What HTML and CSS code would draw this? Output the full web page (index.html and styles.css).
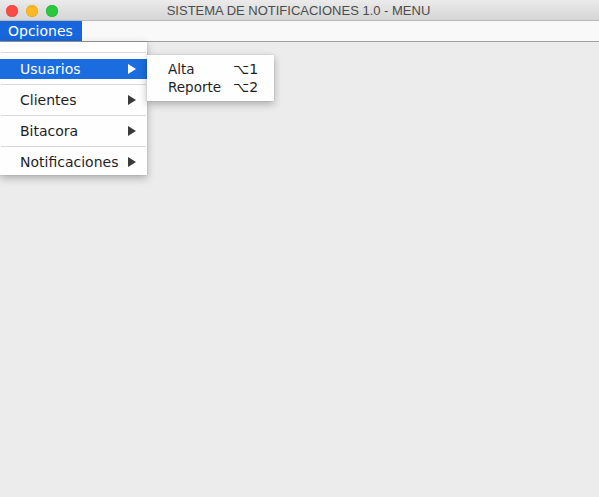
FILE: index.html
```html
<!DOCTYPE html>
<html>
<head>
<meta charset="utf-8">
<link rel="stylesheet" href="styles.css">
</head>
<body>
<div class="window">
  <div class="titlebar">
    <div class="lights">
      <span class="light red"></span>
      <span class="light yellow"></span>
      <span class="light green"></span>
    </div>
    <div class="title">SISTEMA DE NOTIFICACIONES 1.0 - MENU</div>
  </div>
  <div class="menubar">
    <div class="menu-title active">Opciones</div>
  </div>
  <div class="content"></div>

  <div class="dropdown">
    <div class="sep"></div>
    <div class="item first selected"><span>Usuarios</span><span class="arrow"></span></div>
    <div class="sep"></div>
    <div class="item"><span>Clientes</span><span class="arrow"></span></div>
    <div class="sep"></div>
    <div class="item"><span>Bitacora</span><span class="arrow"></span></div>
    <div class="sep"></div>
    <div class="item"><span>Notificaciones</span><span class="arrow"></span></div>
  </div>

  <div class="submenu">
    <div class="subitem"><span class="label">Alta</span><span class="key">⌥1</span></div>
    <div class="subitem"><span class="label">Reporte</span><span class="key">⌥2</span></div>
  </div>
</div>
</body>
</html>
```
FILE: styles.css
```css
html, body {
  margin: 0;
  padding: 0;
}
body {
  width: 599px;
  height: 497px;
  background: #ececec;
  font-family: "DejaVu Sans", "Liberation Sans", sans-serif;
  overflow: hidden;
}
.window {
  position: relative;
  width: 599px;
  height: 497px;
  display: flex;
  flex-direction: column;
}
.titlebar {
  height: 20px;
  background: linear-gradient(#ebebeb, #d5d5d5);
  border-bottom: 1px solid #b9b9b9;
  display: flex;
  align-items: center;
  position: relative;
}
.lights {
  display: flex;
  gap: 8px;
  padding-left: 6px;
  padding-top: 1px;
}
.light {
  width: 12px;
  height: 12px;
  border-radius: 50%;
  display: block;
}
.red { background: #fc4b45; box-shadow: inset 0 0 0 0.5px #e0443e; }
.yellow { background: #fdb826; box-shadow: inset 0 0 0 0.5px #dea123; }
.green { background: #2ac83f; box-shadow: inset 0 0 0 0.5px #1faa2f; }
.title {
  flex: 1;
  text-align: center;
  font-family: "Liberation Sans", sans-serif;
  font-size: 13px;
  color: #4c4c4c;
  margin-right: 60px;
  padding-top: 1px;
}
.menubar {
  height: 20px;
  background: #f9f9f9;
  border-bottom: 1px solid #9e9e9e;
  display: flex;
}
.menu-title {
  font-size: 14px;
  padding: 0 9px 0 8px;
  line-height: 20px;
  color: #222;
}
.menu-title.active {
  background: #1766dc;
  color: #fff;
}
.content {
  flex: 1;
  background: #ececec;
}
.dropdown {
  position: absolute;
  left: 0;
  top: 42px;
  width: 147px;
  height: 133px;
  background: #fefefe;
  box-shadow: 0 3px 8px rgba(0,0,0,0.28), 0 0 1px rgba(0,0,0,0.25);
  padding-top: 10px;
  box-sizing: border-box;
}
.sep {
  height: 1px;
  background: #dadada;
  margin: 0 1px;
}
.item {
  height: 20px;
  margin: 5px 0;
  display: flex;
  align-items: center;
  justify-content: space-between;
  padding: 0 11px 0 20px;
  font-size: 14px;
  color: #1e1e1e;
}
.item.first {
  margin-top: 6px;
}
.item.selected {
  background: #1a6cdf;
  color: #fff;
}
.arrow {
  width: 0;
  height: 0;
  border-top: 5px solid transparent;
  border-bottom: 5px solid transparent;
  border-left: 8px solid #3a3a3a;
}
.item.selected .arrow {
  border-left-color: #fff;
}
.submenu {
  position: absolute;
  left: 147px;
  top: 55px;
  width: 127px;
  height: 46px;
  box-sizing: border-box;
  background: #fefefe;
  box-shadow: 0 3px 8px rgba(0,0,0,0.28), 0 0 1px rgba(0,0,0,0.25);
  padding-top: 5px;
}
.subitem {
  height: 18px;
  display: flex;
  align-items: center;
  padding-left: 21px;
  font-size: 13.5px;
  color: #1e1e1e;
}
.subitem .label {
  width: 65px;
}
.subitem .key {
  font-size: 14px;
}
```
